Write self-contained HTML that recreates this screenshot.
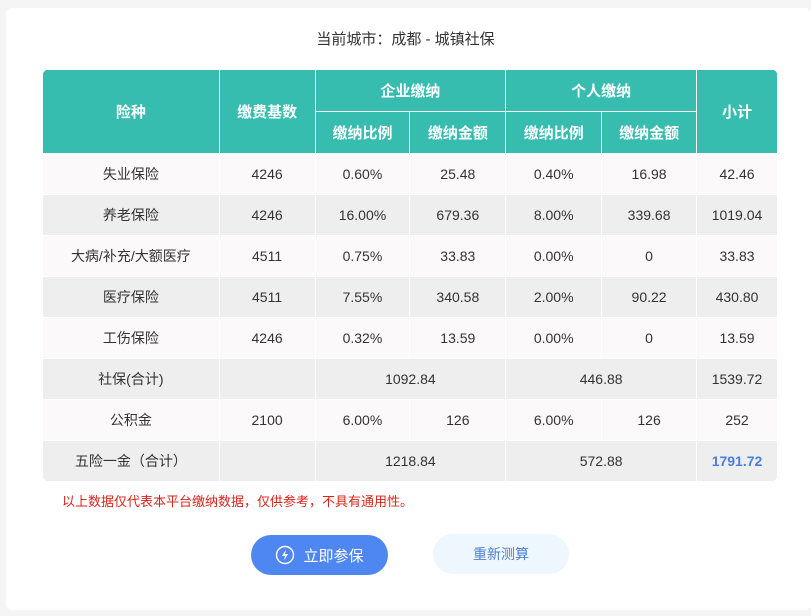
<!DOCTYPE html>
<html><head><meta charset="utf-8"><style>
body{margin:0;width:811px;height:616px;background:#f5f5f5;font-family:"Liberation Sans","Noto Sans CJK SC",sans-serif;overflow:hidden;position:relative}
.card{position:absolute;left:6px;top:8px;width:805px;height:602px;background:#fff;border-radius:6px}
.title{position:absolute;left:0;width:811px;top:28px;text-align:center;font-size:15px;color:#333}
table{position:absolute;left:42px;top:69px;width:736px;border-collapse:collapse;font-size:14px;color:#333;border-radius:8px;overflow:hidden}
td,th{border:1px solid #fff;text-align:center;padding:0}
th{background:#37bdb0;color:#fff;font-weight:bold;font-size:15px;height:41px}
td{height:40px}
tr.a td{background:#fbf9f9}
tr.b td{background:#eeeeee}
.note{position:absolute;left:62px;top:491px;font-size:13px;color:#d9241b}
.btn1{position:absolute;left:251px;top:535px;width:137px;height:40px;border-radius:20px;background:#4f87f2;color:#fff;font-size:15px;display:flex;align-items:center;justify-content:center;gap:8px}
.btn2{position:absolute;left:433px;top:534px;width:136px;height:40px;border-radius:20px;background:#eef6fe;color:#4f7fd0;font-size:14px;display:flex;align-items:center;justify-content:center}
</style></head><body>
<div class="card"></div>
<div class="title">当前城市：成都 - 城镇社保</div>
<table>
<colgroup><col style="width:177px"><col style="width:96px"><col style="width:95px"><col style="width:96px"><col style="width:96px"><col style="width:95px"><col style="width:81px"></colgroup>
<tr><th rowspan="2">险种</th><th rowspan="2">缴费基数</th><th colspan="2">企业缴纳</th><th colspan="2">个人缴纳</th><th rowspan="2">小计</th></tr>
<tr><th>缴纳比例</th><th>缴纳金额</th><th>缴纳比例</th><th>缴纳金额</th></tr>
<tr class="a"><td>失业保险</td><td>4246</td><td>0.60%</td><td>25.48</td><td>0.40%</td><td>16.98</td><td>42.46</td></tr>
<tr class="b"><td>养老保险</td><td>4246</td><td>16.00%</td><td>679.36</td><td>8.00%</td><td>339.68</td><td>1019.04</td></tr>
<tr class="a"><td>大病/补充/大额医疗</td><td>4511</td><td>0.75%</td><td>33.83</td><td>0.00%</td><td>0</td><td>33.83</td></tr>
<tr class="b"><td>医疗保险</td><td>4511</td><td>7.55%</td><td>340.58</td><td>2.00%</td><td>90.22</td><td>430.80</td></tr>
<tr class="a"><td>工伤保险</td><td>4246</td><td>0.32%</td><td>13.59</td><td>0.00%</td><td>0</td><td>13.59</td></tr>
<tr class="b"><td>社保(合计)</td><td></td><td colspan="2">1092.84</td><td colspan="2">446.88</td><td>1539.72</td></tr>
<tr class="a"><td>公积金</td><td>2100</td><td>6.00%</td><td>126</td><td>6.00%</td><td>126</td><td>252</td></tr>
<tr class="b"><td>五险一金（合计）</td><td></td><td colspan="2">1218.84</td><td colspan="2">572.88</td><td style="color:#4a7fdc;font-weight:bold">1791.72</td></tr>
</table>
<div class="note">以上数据仅代表本平台缴纳数据，仅供参考，不具有通用性。</div>
<div class="btn1"><svg width="20" height="20" viewBox="0 0 20 20"><circle cx="10" cy="10" r="8.5" fill="none" stroke="#fff" stroke-width="1.4"/><path d="M11 4.5L7 11h3l-1 4.5 4-6.5h-3z" fill="#fff"/></svg>立即参保</div>
<div class="btn2">重新测算</div>
</body></html>
